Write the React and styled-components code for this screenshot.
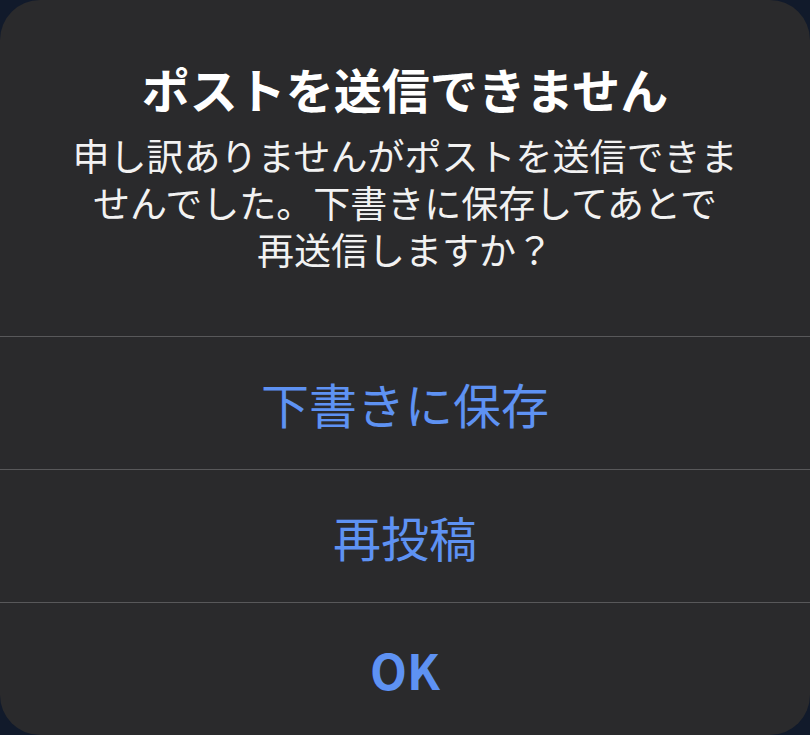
import styled, { createGlobalStyle } from 'styled-components';

const GlobalStyle = createGlobalStyle`
  html, body {
    margin: 0;
    padding: 0;
    background: #111a2b;
  }
  body {
    font-family: "Noto Sans CJK JP", "Noto Sans", sans-serif;
  }
`;

const ACTIONS = [
  { label: '下書きに保存' },
  { label: '再投稿' },
  { label: 'OK', bold: true },
];

function App() {
  return (
    <>
      <GlobalStyle />
      <Screen>
        <Alert role="alertdialog">
          <Header>
            <Title>ポストを送信できません</Title>
            <Message>
              申し訳ありませんがポストを送信できま
              <br />
              せんでした。下書きに保存してあとで
              <br />
              再送信しますか？
            </Message>
          </Header>
          {ACTIONS.map((action) => (
            <Action key={action.label} $bold={action.bold}>
              {action.label}
            </Action>
          ))}
        </Alert>
      </Screen>
    </>
  );
}

const Screen = styled.div`
  width: 810px;
  height: 735px;
  overflow: hidden;
  background: #111a2b;
`;

const Alert = styled.div`
  width: 810px;
  height: 735px;
  border-radius: 40px;
  background: #2a2a2c;
  display: flex;
  flex-direction: column;
  overflow: hidden;
`;

const Header = styled.div`
  height: 336px;
  box-sizing: border-box;
  padding-top: 58px;
  display: flex;
  flex-direction: column;
  align-items: center;
  gap: 14px;
  text-align: center;
  color: #ffffff;
`;

const Title = styled.h1`
  margin: 0;
  font-size: 48px;
  line-height: 60px;
  font-weight: 700;
`;

const Message = styled.p`
  margin: 0;
  font-size: 37px;
  line-height: 47px;
  font-weight: 400;
  color: #f2f2f2;
`;

const Action = styled.button`
  flex: 1;
  border: none;
  border-top: 1px solid #58585a;
  background: transparent;
  color: #5e92f3;
  font-family: inherit;
  font-size: 48px;
  font-weight: ${(p) => (p.$bold ? 700 : 400)};
  display: flex;
  align-items: center;
  justify-content: center;
  padding: 0;
  cursor: pointer;
`;

export default App;
